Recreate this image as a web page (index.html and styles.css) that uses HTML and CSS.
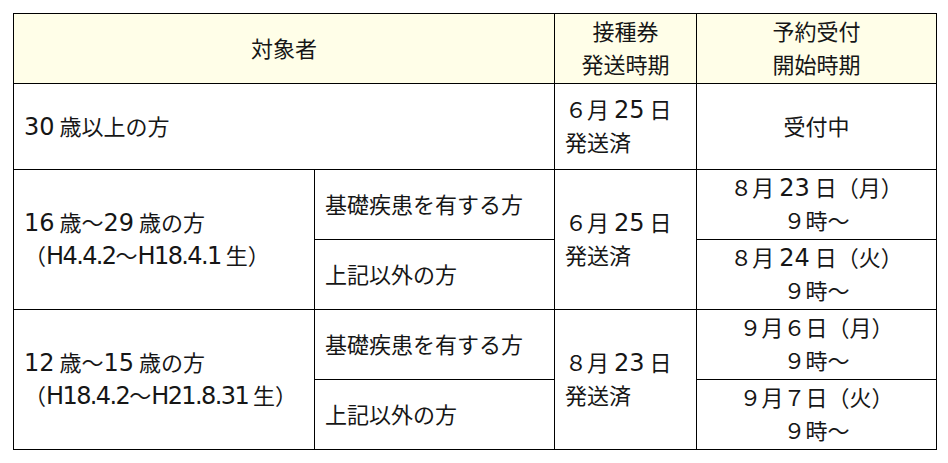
FILE: index.html
```html
<!DOCTYPE html>
<html lang="ja">
<head>
<meta charset="utf-8">
<title>接種スケジュール</title>
<link rel="stylesheet" href="styles.css">
</head>
<body>
<table class="sched">
  <colgroup>
    <col class="c1"><col class="c2"><col class="c3"><col class="c4">
  </colgroup>
  <thead>
    <tr class="hd">
      <th colspan="2">対象者</th>
      <th>接種券<br>発送時期</th>
      <th>予約受付<br>開始時期</th>
    </tr>
  </thead>
  <tbody>
    <tr class="r1">
      <td colspan="2" class="l"><span class="n">30</span> 歳以上の方</td>
      <td class="l">６月 <span class="n">25</span> 日<br>発送済</td>
      <td class="c">受付中</td>
    </tr>
    <tr class="rs">
      <td rowspan="2" class="l"><span class="n">16</span> 歳～<span class="n">29</span> 歳の方<br>（<span class="n t">H4.4.2</span>～<span class="n t">H18.4.1</span> 生）</td>
      <td class="l">基礎疾患を有する方</td>
      <td rowspan="2" class="l">６月 <span class="n">25</span> 日<br>発送済</td>
      <td class="c">８月 <span class="n">23</span> 日（月）<br>９時～</td>
    </tr>
    <tr class="rs">
      <td class="l">上記以外の方</td>
      <td class="c">８月 <span class="n">24</span> 日（火）<br>９時～</td>
    </tr>
    <tr class="rs rs3">
      <td rowspan="2" class="l"><span class="n">12</span> 歳～<span class="n">15</span> 歳の方<br>（<span class="n t">H18.4.2</span>～<span class="n t">H21.8.31</span> 生）</td>
      <td class="l">基礎疾患を有する方</td>
      <td rowspan="2" class="l">８月 <span class="n">23</span> 日<br>発送済</td>
      <td class="c">９月６日（月）<br>９時～</td>
    </tr>
    <tr class="rs">
      <td class="l">上記以外の方</td>
      <td class="c">９月７日（火）<br>９時～</td>
    </tr>
  </tbody>
</table>
</body>
</html>
```

FILE: styles.css
```css
html, body {
  margin: 0;
  padding: 0;
  background: #ffffff;
}

body {
  padding: 13px 0 0 13px;
  font-family: "Noto Sans CJK JP", sans-serif;
  font-size: 22px;
  color: #161616;
}

.sched {
  border-collapse: collapse;
  table-layout: fixed;
  width: 923px;
}

.c1 { width: 301px; }
.c2 { width: 240px; }
.c3 { width: 142px; }
.c4 { width: 240px; }

.sched th,
.sched td {
  border: 1px solid #000000;
  padding: 0 10px 3px;
  vertical-align: middle;
  line-height: 33px;
  font-weight: normal;
  white-space: nowrap;
}

.sched th {
  background: #fffee8;
  text-align: center;
}

.hd { height: 70px; }
.r1 { height: 86px; }
.rs { height: 70px; }
.rs3 { height: 69px; }

.l { text-align: left; }
.c { text-align: center; }

.n {
  font-family: "DejaVu Sans", sans-serif;
  font-size: 24px;
  line-height: 1;
}

.n.t {
  letter-spacing: -1.6px;
}
```
